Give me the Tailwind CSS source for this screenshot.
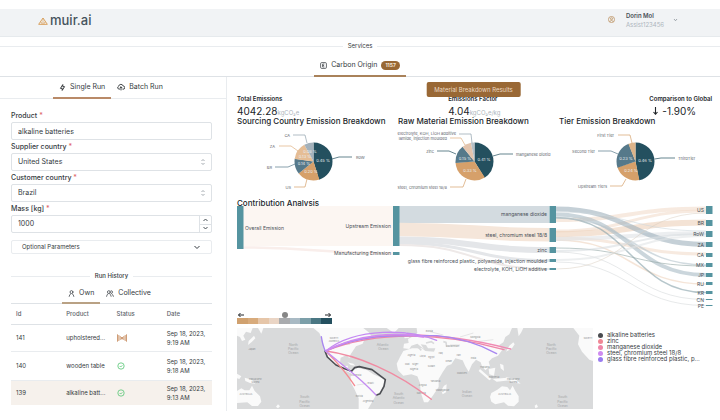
<!DOCTYPE html>
<html lang="en">
<head>
    <meta charset="UTF-8">
    <meta name="viewport" content="width=device-width, initial-scale=1.0">
    <title>muir.ai - Carbon Origin</title>
    <script src="https://cdn.jsdelivr.net/npm/@tailwindcss/browser@4"></script>
</head>
<body class="bg-white font-[Inter,sans-serif] text-[7px] leading-[10px] text-[#343a40]">

<!-- Header -->
<header class="mt-[9px] h-[28px] flex items-center justify-between bg-[#f1f3f5] border-b border-[#e6eaed] pl-[38px] pr-[42px] pb-[6px]">
    <a href="#" class="flex items-center gap-[2px]" aria-label="muir.ai">
        <svg class="w-[10px] h-[8px] mt-[2px]" viewBox="0 0 30 24" fill="none" stroke="#d9a25f" stroke-width="3" stroke-linejoin="round">
            <path d="M15 3 L28 22 H2 Z"/>
            <path d="M15 3 V22 M7 16 Q12 12 12 22 M23 16 Q18 12 18 22" stroke-width="2"/>
        </svg>
        <span class="text-[13px] leading-[16px] font-medium text-[#45525c]">muir.ai</span>
    </a>
    <button class="flex items-center text-left">
        <svg class="w-[7px] h-[7px] mr-[11px]" viewBox="0 0 24 24" fill="none" stroke="#b98b56" stroke-width="2.5">
            <circle cx="12" cy="12" r="10.5"/>
            <circle cx="12" cy="9.500" r="3.500"/>
            <path d="M5.500 19 Q12 11 18.500 19"/>
        </svg>
        <span class="flex flex-col leading-[9px] text-[6px] mr-[9px]">
            <span class="font-semibold text-[#495057]">Dorin Mol</span>
            <span class="text-[#adb5bd]">Assist123456</span>
        </span>
        <svg class="w-[5px] h-[4px]" viewBox="0 0 10 8" fill="none" stroke="#868e96" stroke-width="1.5"><path d="M2 2 L5 5.500 L8 2"/></svg>
    </button>
</header>

<!-- Services -->
<div class="flex items-center gap-[5px] mt-1 h-[10px] text-[6px]">
    <span class="flex-1 border-t border-[#e9ecef]"></span>
    <h2>Services</h2>
    <span class="flex-1 border-t border-[#e9ecef]"></span>
</div>
<nav class="flex justify-center mt-1 h-[22px] border-b border-[#dee2e6]">
    <button class="flex items-center gap-1 h-[22px] px-[6px] border-b-2 border-[#a9825a] text-[7px]">
        <svg class="w-[7px] h-[7px]" viewBox="0 0 24 24" fill="none" stroke="#343a40" stroke-width="2.500">
            <rect x="2" y="2" width="20" height="20" rx="4"/>
            <path d="M15 7 H9 V17 H15 M9 12 H14"/>
        </svg>
        Carbon Origin
        <span class="rounded-full bg-[#996835] text-[#f3e6d6] text-[5px] leading-[9px] font-bold px-1">1157</span>
    </button>
</nav>

<main class="flex">
    <!-- Left column -->
    <aside class="w-[227px] shrink-0 border-r border-[#e9ecef] pb-[6px]">
        <div class="flex justify-center h-[22px] pr-1 border-b border-[#e9ecef]">
            <button class="flex items-center gap-1 h-[22px] px-[6px] border-b-2 border-[#b98a68] text-[7px]">
                <svg class="w-[7px] h-[7px]" viewBox="0 0 24 24" fill="none" stroke="#212529" stroke-width="3" stroke-linejoin="round">
                    <path d="M13 2 V9 H19 L11 22 V15 H5 Z"/>
                </svg>
                Single Run
            </button>
            <button class="flex items-center gap-1 h-[22px] px-[6px] border-b-2 border-transparent text-[7px]">
                <svg class="w-[8px] h-[8px]" viewBox="0 0 24 24" fill="none" stroke="#212529" stroke-width="2.500" stroke-linecap="round" stroke-linejoin="round">
                    <path d="M7 19 A5 5 0 0 1 5 9.500 A7 7 0 0 1 18.500 9 A5 5 0 0 1 18 19"/>
                    <path d="M12 21 V12 M8.500 15 L12 11.500 L15.500 15"/>
                </svg>
                Batch Run
            </button>
        </div>

        <form class="flex flex-col gap-px pl-[11px] pr-[14px] pt-[11px]">
            <label for="product" class="h-[11px] leading-[11px] font-medium">Product <span class="text-[#e0646a]">*</span></label>
            <input id="product" type="text" value="alkaline batteries" class="h-[18px] w-full px-[6px] rounded-xs border border-[#dee2e6] text-[7px]">

            <label for="supplier" class="h-[11px] leading-[11px] font-medium">Supplier country <span class="text-[#e0646a]">*</span></label>
            <div class="relative">
                <select id="supplier" class="block appearance-none h-[18px] w-full px-[6px] rounded-xs border border-[#dee2e6] text-[7px]">
                    <option>United States</option>
                </select>
                <svg class="absolute right-[6px] top-[5px] w-[6px] h-[8px] pointer-events-none" viewBox="0 0 12 16" fill="none" stroke="#868e96" stroke-width="1.500"><path d="M3 6 L6 3 L9 6 M3 10 L6 13 L9 10"/></svg>
            </div>

            <label for="customer" class="h-[11px] leading-[11px] font-medium">Customer country <span class="text-[#e0646a]">*</span></label>
            <div class="relative">
                <select id="customer" class="block appearance-none h-[18px] w-full px-[6px] rounded-xs border border-[#dee2e6] text-[7px]">
                    <option>Brazil</option>
                </select>
                <svg class="absolute right-[6px] top-[5px] w-[6px] h-[8px] pointer-events-none" viewBox="0 0 12 16" fill="none" stroke="#868e96" stroke-width="1.500"><path d="M3 6 L6 3 L9 6 M3 10 L6 13 L9 10"/></svg>
            </div>

            <label for="mass" class="h-[11px] leading-[11px] font-medium">Mass [kg] <span class="text-[#e0646a]">*</span></label>
            <div class="flex h-[18px] rounded-xs border border-[#dee2e6]">
                <input id="mass" type="number" value="1000" class="[appearance:textfield] flex-1 min-w-0 px-[6px] text-[7px]">
                <div class="flex flex-col w-[12px] border-l border-[#dee2e6]">
                    <button type="button" aria-label="Increase" class="flex-1 flex items-center justify-center border-b border-[#dee2e6]">
                        <svg class="w-[5px] h-[4px]" viewBox="0 0 10 8" fill="none" stroke="#495057" stroke-width="2"><path d="M1 6 L5 2 L9 6"/></svg>
                    </button>
                    <button type="button" aria-label="Decrease" class="flex-1 flex items-center justify-center">
                        <svg class="w-[5px] h-[4px]" viewBox="0 0 10 8" fill="none" stroke="#495057" stroke-width="2"><path d="M1 2 L5 6 L9 2"/></svg>
                    </button>
                </div>
            </div>

            <button type="button" class="mt-[6px] h-[14px] flex items-center justify-between pl-[10px] pr-[11px] rounded-xs border border-[#e9ecef] text-[6px]">
                Optional Parameters
                <svg class="w-[6px] h-[5px]" viewBox="0 0 12 10" fill="none" stroke="#343a40" stroke-width="2"><path d="M1 2 L6 7 L11 2"/></svg>
            </button>
        </form>

        <!-- Run history -->
        <section class="pl-[11px] pr-[14px] pt-[17px]">
            <div class="flex items-center gap-[5px] h-[10px] text-[6px]">
                <span class="flex-1 border-t border-[#e9ecef]"></span>
                <h3 class="font-medium">Run History</h3>
                <span class="flex-1 border-t border-[#e9ecef]"></span>
            </div>
            <div class="flex justify-center mt-[3px] h-[20px] pr-1 border-b border-[#dee2e6]">
                <button class="flex items-center gap-1 h-[20px] px-[6px] border-b-2 border-[#b9a184] text-[7px]">
                    <svg class="w-[7px] h-[7px]" viewBox="0 0 24 24" fill="none" stroke="#343a40" stroke-width="2.500" stroke-linecap="round"><circle cx="12" cy="7" r="5"/><path d="M4 22 Q5 14 9 13 M20 22 Q19 14 15 13"/></svg>
                    Own
                </button>
                <button class="flex items-center gap-1 h-[20px] px-[6px] border-b-2 border-transparent text-[7px]">
                    <svg class="w-[8px] h-[7px]" viewBox="0 0 28 24" fill="none" stroke="#343a40" stroke-width="2.500" stroke-linecap="round"><circle cx="10" cy="7" r="5"/><path d="M2 22 Q3 14 7 13 M18 22 Q17 14 13 13 M18 2 A5 5 0 0 1 18 12 M21 14 Q25 16 26 22"/></svg>
                    Collective
                </button>
            </div>
            <table class="w-full table-fixed text-[6px] leading-[9px] text-left">
                <thead>
                    <tr class="h-[20px] border-b border-[#dee2e6] text-[#5c636a]">
                        <th class="pl-[5px] font-medium">Id</th>
                        <th class="pl-[5px] font-medium">Product</th>
                        <th class="pl-[5px] font-medium">Status</th>
                        <th class="pl-[5px] font-medium">Date</th>
                    </tr>
                </thead>
                <tbody>
                    <tr class="h-[27px] border-b border-[#e9ecef]">
                        <td class="pl-[5px]">141</td>
                        <td class="pl-[5px] whitespace-nowrap">upholstered...</td>
                        <td class="pl-[5px]">
                            <svg class="w-[10px] h-[8px]" viewBox="0 0 30 24" role="img" aria-label="Running">
                                <g fill="#cf9d77">
                                    <rect x="0" y="1" width="3" height="22"/><rect x="4" y="3" width="3" height="18"/><rect x="8" y="6" width="3" height="12"/>
                                    <rect x="12" y="9" width="6" height="7"/>
                                    <rect x="19" y="6" width="3" height="12"/><rect x="23" y="3" width="3" height="18"/><rect x="27" y="1" width="3" height="22"/>
                                </g>
                            </svg>
                        </td>
                        <td class="pl-[5px] whitespace-nowrap">Sep 18, 2023,<br>9:19 AM</td>
                    </tr>
                    <tr class="h-[29px] border-b border-[#e9ecef]">
                        <td class="pl-[5px]">140</td>
                        <td class="pl-[5px] whitespace-nowrap">wooden table</td>
                        <td class="pl-[5px]">
                            <svg class="w-[8px] h-[8px]" viewBox="0 0 24 24" fill="none" stroke="#5cc878" stroke-width="2.500" role="img" aria-label="Done"><circle cx="12" cy="12" r="9.500"/><path d="M8 12 L11 15 L16 10"/></svg>
                        </td>
                        <td class="pl-[5px] whitespace-nowrap">Sep 18, 2023,<br>9:18 AM</td>
                    </tr>
                    <tr class="h-[25px] bg-[#f6f1ec]">
                        <td class="pl-[5px]">139</td>
                        <td class="pl-[5px] whitespace-nowrap">alkaline batt...</td>
                        <td class="pl-[5px]">
                            <svg class="w-[8px] h-[8px]" viewBox="0 0 24 24" fill="none" stroke="#5cc878" stroke-width="2.500" role="img" aria-label="Done"><circle cx="12" cy="12" r="9.500"/><path d="M8 12 L11 15 L16 10"/></svg>
                        </td>
                        <td class="pl-[5px] whitespace-nowrap">Sep 18, 2023,<br>9:13 AM</td>
                    </tr>
                </tbody>
            </table>
        </section>
    </aside>

    <!-- Results -->
    <section class="relative flex-1 min-w-0 pl-[10px] pt-[17px]">
        <button class="absolute top-[5px] left-1/2 -translate-x-1/2 h-[15px] px-2 rounded-xs bg-[#996835] text-[#ecd9c2] text-[6px] whitespace-nowrap">Material Breakdown Results</button>

        <div class="flex justify-between pr-2 text-[#212529]">
            <div>
                <p class="text-[6px] font-semibold">Total Emissions</p>
                <p class="text-[10px] leading-[14px]">4042.28<span class="text-[6px] text-[#adb5bd]">kgCO₂e</span></p>
            </div>
            <div>
                <p class="text-[6px] font-semibold">Emissions Factor</p>
                <p class="text-[10px] leading-[14px]">4.04<span class="text-[6px] text-[#adb5bd]">kgCO₂e/kg</span></p>
            </div>
            <div>
                <p class="text-[6px] font-semibold">Comparison to Global</p>
                <p class="flex items-center gap-1 pl-1 text-[10px] leading-[14px]">
                    <svg class="w-[5px] h-[8px]" viewBox="0 0 10 16" fill="none" stroke="#212529" stroke-width="2.200"><path d="M5 0 V14 M1 10 L5 14.500 L9 10"/></svg>
                    -1.90%
                </p>
            </div>
        </div>

        <!-- Pie charts -->
        <div class="grid grid-cols-3 -mt-1">
            <div>
                <h3 class="text-[8px] font-medium text-[#212529] whitespace-nowrap">Sourcing Country Emission Breakdown</h3>
                <svg class="block w-full overflow-visible" viewBox="0 0 161 73" font-size="4" fill="#5c636a">
                    <g fill="none" stroke-width="19" transform="rotate(-90 76.500 35.500)">
                        <circle cx="76.500" cy="35.500" r="9.500" pathLength="360" stroke="#24505f" stroke-dasharray="163 360"/>
                        <circle cx="76.500" cy="35.500" r="9.500" pathLength="360" stroke="#d6a06a" stroke-dasharray="69 360" stroke-dashoffset="-162"/>
                        <circle cx="76.500" cy="35.500" r="9.500" pathLength="360" stroke="#56798a" stroke-dasharray="48 360" stroke-dashoffset="-231"/>
                        <circle cx="76.500" cy="35.500" r="9.500" pathLength="360" stroke="#e5bd95" stroke-dasharray="53 360" stroke-dashoffset="-278"/>
                        <circle cx="76.500" cy="35.500" r="9.500" pathLength="360" stroke="#a3b1bb" stroke-dasharray="29 360" stroke-dashoffset="-331"/>
                    </g>
                    <g fill="none" stroke-width="0.700">
                        <path d="M95 33 L102 31 H115" stroke="#24505f"/>
                        <path d="M70 53 L68 61 H57" stroke="#d6a06a"/>
                        <path d="M58 38 L51 41 H38" stroke="#56798a"/>
                        <path d="M61 25 L54 20 H42" stroke="#e0b080"/>
                        <path d="M70 17 L68 9 H56" stroke="#8fa0ac"/>
                    </g>
                    <text x="119" y="33">RoW</text>
                    <text x="54" y="63" text-anchor="end">US</text>
                    <text x="35" y="43" text-anchor="end">BR</text>
                    <text x="38" y="22" text-anchor="end">ZA</text>
                    <text x="53" y="11" text-anchor="end">CA</text>
                    <g fill="#e9eef0" text-anchor="middle">
                        <text x="86" y="35.500">0.45 %</text>
                        <text x="74" y="46.500">0.20 %</text>
                        <text x="67" y="39">0.14 %</text>
                        <text x="68" y="32">0.13 %</text>
                        <text x="73" y="27">0.08 %</text>
                    </g>
                </svg>
            </div>
            <div>
                <h3 class="text-[8px] font-medium text-[#212529] whitespace-nowrap">Raw Material Emission Breakdown</h3>
                <svg class="block w-full overflow-visible" viewBox="0 0 161 73" font-size="4" fill="#5c636a">
                    <g fill="none" stroke-width="19" transform="rotate(-90 76.500 35.500)">
                        <circle cx="76.500" cy="35.500" r="9.500" pathLength="360" stroke="#24505f" stroke-dasharray="148 360"/>
                        <circle cx="76.500" cy="35.500" r="9.500" pathLength="360" stroke="#d6a06a" stroke-dasharray="119 360" stroke-dashoffset="-147"/>
                        <circle cx="76.500" cy="35.500" r="9.500" pathLength="360" stroke="#56798a" stroke-dasharray="56 360" stroke-dashoffset="-265"/>
                        <circle cx="76.500" cy="35.500" r="9.500" pathLength="360" stroke="#e3c4ad" stroke-dasharray="28 360" stroke-dashoffset="-321"/>
                        <circle cx="76.500" cy="35.500" r="9.500" pathLength="360" stroke="#b4bfc6" stroke-dasharray="11 360" stroke-dashoffset="-349"/>
                    </g>
                    <g fill="none" stroke-width="0.700">
                        <path d="M95 30 L102 28 H115" stroke="#24505f"/>
                        <path d="M68 53 L65 61 H52" stroke="#d6a06a"/>
                        <path d="M58 28 L51 25 H39" stroke="#24505f"/>
                        <path d="M67 19 L63 12 H52" stroke="#e0b080"/>
                        <path d="M74 17 L73 8 H61" stroke="#8fa0ac"/>
                    </g>
                    <text x="118" y="30">manganese dioxid</text>
                    <text x="49" y="62.500" text-anchor="end">steel, chromium steel 18/8</text>
                    <text x="36" y="27" text-anchor="end">zinc</text>
                    <text x="49" y="14" text-anchor="end">lamide, injection moulded</text>
                    <text x="58" y="9" text-anchor="end">electrolyte, KOH, LiOH additive</text>
                    <g fill="#e9eef0" text-anchor="middle">
                        <text x="86" y="34.500">0.41 %</text>
                        <text x="72" y="46">0.33 %</text>
                        <text x="67" y="34">0.15 %</text>
                    </g>
                </svg>
            </div>
            <div>
                <h3 class="text-[8px] font-medium text-[#212529] whitespace-nowrap">Tier Emission Breakdown</h3>
                <svg class="block w-full overflow-visible" viewBox="0 0 161 73" font-size="4" fill="#5c636a">
                    <g fill="none" stroke-width="19" transform="rotate(-90 76.500 35.500)">
                        <circle cx="76.500" cy="35.500" r="9.500" pathLength="360" stroke="#24505f" stroke-dasharray="169 360"/>
                        <circle cx="76.500" cy="35.500" r="9.500" pathLength="360" stroke="#d6a06a" stroke-dasharray="84 360" stroke-dashoffset="-168"/>
                        <circle cx="76.500" cy="35.500" r="9.500" pathLength="360" stroke="#56798a" stroke-dasharray="88 360" stroke-dashoffset="-251"/>
                        <circle cx="76.500" cy="35.500" r="9.500" pathLength="360" stroke="#dcb48a" stroke-dasharray="22 360" stroke-dashoffset="-338"/>
                    </g>
                    <g fill="none" stroke-width="0.700">
                        <path d="M95.500 33 L102 32 H116" stroke="#24505f"/>
                        <path d="M67 53 L63 60 H51" stroke="#d6a06a"/>
                        <path d="M59 28 L52 25 H39" stroke="#56798a"/>
                        <path d="M73 17 L71 9 H59" stroke="#d6a06a"/>
                    </g>
                    <text x="119" y="34">ThirdTier</text>
                    <text x="48" y="61.500" text-anchor="end">Upstream Tiers</text>
                    <text x="36" y="26.500" text-anchor="end">Second Tier</text>
                    <text x="55" y="10.500" text-anchor="end">First Tier</text>
                    <g fill="#e9eef0" text-anchor="middle">
                        <text x="86" y="36">0.46 %</text>
                        <text x="72" y="45.500">0.24 %</text>
                        <text x="67" y="33.500">0.23 %</text>
                    </g>
                </svg>
            </div>
        </div>

        <!-- Sankey -->
        <h3 class="h-[8px] leading-[8px] text-[8px] font-medium text-[#212529]">Contribution Analysis</h3>
        <svg class="block w-full overflow-visible -mt-[2px]" viewBox="0 0 483 107" font-size="5" fill="#495057">
            <g fill="none">
                <path d="M6 21 H156" stroke="#fcf6f2" stroke-width="40"/>
                <path d="M6 42.500 C81 42.500 81 48.500 156 48.500" stroke="#f9eeeb" stroke-width="2.500"/>
                <path d="M162 9.500 H312" stroke="#d3dbe0" stroke-width="17"/>
                <path d="M162 24.500 C237 24.500 237 29.700 312 29.700" stroke="#f5e6da" stroke-width="13.500"/>
                <path d="M162 34.500 C237 34.500 237 45 312 45" stroke="#e4e6e9" stroke-width="6"/>
                <path d="M162 38 C237 38 237 55.500 312 55.500" stroke="#e4e6e9" stroke-width="3"/>
                <path d="M162 40 C237 40 237 64 312 64" stroke="#eee9e8" stroke-width="2"/>
            </g>
            <g fill="none" stroke-opacity="0.600">
                <path d="M319 15 C394 15 394 3.500 469 3.500" stroke="#f1dccb" stroke-width="4"/>
                <path d="M319 26 C394 26 394 6 469 6" stroke="#f1dccb" stroke-width="3"/>
                <path d="M319 29 C394 29 394 17.500 469 17.500" stroke="#ecd0b9" stroke-width="6"/>
                <path d="M319 33 C394 33 394 49 469 49" stroke="#f1dccb" stroke-width="3"/>
                <path d="M319 35 C394 35 394 79 469 79" stroke="#eed3be" stroke-width="1.500"/>
                <path d="M319 34 C394 34 394 28 469 28" stroke="#dfe3e6" stroke-width="4"/>
                <path d="M319 4 C394 4 394 39.500 469 39.500" stroke="#9fb1bc" stroke-width="5"/>
                <path d="M319 9.500 C394 9.500 394 70 469 70" stroke="#a9bac4" stroke-width="4"/>
                <path d="M319 12.500 C394 12.500 394 87.500 469 87.500" stroke="#86a0a9" stroke-width="1.500"/>
                <path d="M319 13 C394 13 394 60 469 60" stroke="#b4c3cc" stroke-width="1.500"/>
                <path d="M319 7 C394 7 394 26 469 26" stroke="#cfd8dd" stroke-width="1"/>
                <path d="M319 43 C394 43 394 61 469 61" stroke="#93a7a5" stroke-width="1"/>
                <path d="M319 46 C394 46 394 29 469 29" stroke="#d9dee1" stroke-width="2"/>
                <path d="M319 47 C394 47 394 94.500 469 94.500" stroke="#cdd1d3" stroke-width="0.800"/>
                <path d="M319 55 C394 55 394 31 469 31" stroke="#e1e4e6" stroke-width="2"/>
                <path d="M319 57 C394 57 394 100.500 469 100.500" stroke="#cdd1d3" stroke-width="0.800"/>
                <path d="M319 64 C394 64 394 8 469 8" stroke="#d8cabb" stroke-width="0.800"/>
            </g>
            <g fill="#5594a0">
                <rect x="0" y="1" width="6.500" height="43"/>
                <rect x="156" y="1" width="6.500" height="40"/>
                <rect x="156" y="47" width="6.500" height="3"/>
                <rect x="312.500" y="1" width="6.500" height="17"/>
                <rect x="312.500" y="23" width="6.500" height="14"/>
                <rect x="312.500" y="42" width="6.500" height="6"/>
                <rect x="312.500" y="54" width="6.500" height="3"/>
                <rect x="312.500" y="63" width="6.500" height="2"/>
                <rect x="469" y="1" width="6.500" height="8"/>
                <rect x="469" y="15" width="6.500" height="6"/>
                <rect x="469" y="26" width="6.500" height="6"/>
                <rect x="469" y="37" width="6.500" height="5"/>
                <rect x="469" y="48" width="6.500" height="4"/>
                <rect x="469" y="58" width="6.500" height="4"/>
                <rect x="469" y="68" width="6.500" height="4"/>
                <rect x="469" y="77" width="6.500" height="3"/>
                <rect x="469" y="86" width="6.500" height="3"/>
                <rect x="469" y="94" width="6.500" height="1"/>
                <rect x="469" y="100" width="6.500" height="1"/>
            </g>
            <text x="8" y="25">Overall Emission</text>
            <g text-anchor="end">
                <text x="154" y="23">Upstream Emission</text>
                <text x="154" y="50">Manufacturing Emission</text>
                <text x="310" y="11">manganese dioxide</text>
                <text x="310" y="32">steel, chromium steel 18/8</text>
                <text x="310" y="47">zinc</text>
                <text x="310" y="57.500">glass fibre reinforced plastic, polyamide, injection moulded</text>
                <text x="310" y="66">electrolyte, KOH, LiOH additive</text>
                <text x="467" y="7">US</text>
                <text x="467" y="20">BR</text>
                <text x="467" y="31">RoW</text>
                <text x="467" y="41.500">ZA</text>
                <text x="467" y="52">CA</text>
                <text x="467" y="62">MX</text>
                <text x="467" y="72">JP</text>
                <text x="467" y="81">RU</text>
                <text x="467" y="89.500">KR</text>
                <text x="467" y="96.500">CN</text>
                <text x="467" y="103">PE</text>
            </g>
        </svg>

        <!-- Colour scale -->
        <div class="w-[95px]">
            <div class="flex items-center justify-between h-[6px]">
                <svg class="w-[8px] h-[6px]" viewBox="0 0 16 12" fill="none" stroke="#212529" stroke-width="2"><path d="M14 6 H3 M7 2 L3 6 L7 10"/></svg>
                <span class="w-[6px] h-[6px] rounded-full bg-[#868686]"></span>
                <svg class="w-[8px] h-[6px]" viewBox="0 0 16 12" fill="none" stroke="#212529" stroke-width="2"><path d="M2 6 H13 M9 2 L13 6 L9 10"/></svg>
            </div>
            <div class="grid grid-cols-9 h-[6px]">
                <span class="bg-[#d0a16f]"></span>
                <span class="bg-[#d8ab7c]"></span>
                <span class="bg-[#e6c6a9]"></span>
                <span class="bg-[#ead5c5]"></span>
                <span class="bg-[#a9abae]"></span>
                <span class="bg-[#a9bac4]"></span>
                <span class="bg-[#7c9fa9]"></span>
                <span class="bg-[#4a7783]"></span>
                <span class="bg-[#24505f]"></span>
            </div>
        </div>

        <!-- Map -->
        <div class="flex gap-[5px] mt-1">
            <svg class="block flex-1 min-w-0" viewBox="21 69 1068 243">
                <rect x="21" y="69" width="1068" height="243" fill="#d9dadb"/>
                <g fill="#fafafa">
                    <path d="M21 69 H68 L62 84 L48 80 L40 92 L46 104 L36 108 L30 96 L21 92 Z"/>
                    <path d="M56 108 L66 98 L72 92 L76 100 L66 110 L54 120 Z"/>
                    <path d="M84 69 L94 86 L100 69 Z"/>
                    <path d="M21 258 L34 250 L44 256 L58 256 L66 242 L74 258 L90 274 L94 290 L84 303 L66 303 L52 292 L21 294 Z"/>
                    <path d="M21 206 L34 214 L28 222 L21 220 Z M44 218 L66 224 L76 236 L60 234 L46 228 Z"/>
                    <path d="M138 305 L144 298 L150 304 L144 310 Z"/>
                    <!-- North and Central America -->
                    <path d="M250 69 L268 84 L278 108 L282 132 L292 154 L312 176 L336 192 L356 202 L366 206 L366 196 L352 192 L354 182 L340 184 L330 172 L332 158 L350 150 L358 160 L362 148 L378 124 L398 116 L404 102 L424 92 L416 82 L400 69 Z"/>
                    <path d="M352 172 L370 176 L376 182 L362 180 Z"/>
                    <!-- South America -->
                    <path d="M368 196 L384 188 L412 196 L430 208 L462 222 L464 234 L452 262 L436 274 L426 292 L414 312 L386 312 L386 280 L372 250 L362 232 L362 212 Z"/>
                    <path d="M470 69 L492 84 L506 69 Z M520 88 L530 82 L538 98 L524 100 Z"/>
                    <!-- Africa -->
                    <path d="M520 138 L546 130 L576 130 L586 138 L614 140 L626 160 L638 178 L654 178 L638 202 L626 222 L626 246 L610 270 L594 292 L582 292 L572 262 L570 234 L562 214 L544 208 L520 212 L504 196 L500 176 L510 156 Z"/>
                    <path d="M642 242 L650 238 L648 262 L638 268 L634 256 Z"/>
                    <!-- Europe and Asia -->
                    <path d="M520 130 L522 116 L536 114 L534 102 L550 94 L562 84 L560 69 H880 L874 82 L866 94 L862 69 H846 L838 88 L826 96 L820 112 L808 120 L816 136 L804 152 L786 160 L776 170 L780 184 L766 196 L756 184 L752 172 L738 164 L726 178 L716 200 L706 184 L698 166 L676 160 L664 178 L640 186 L626 164 L612 140 L616 130 L594 130 L588 120 L572 118 L582 132 L562 116 L544 122 L538 132 Z"/>
                    <path d="M838 122 L850 112 L854 118 L846 130 L828 140 Z M750 192 L784 222 L778 226 L746 198 Z M776 192 L796 188 L792 212 L778 208 Z M788 222 L830 218 L840 226 L800 230 Z M810 176 L820 180 L822 198 L812 190 Z M826 216 L856 222 L872 236 L846 232 Z"/>
                    <!-- Australia -->
                    <path d="M784 264 L802 254 L816 244 L832 246 L840 256 L848 242 L856 258 L866 274 L866 290 L852 304 L834 302 L822 292 L796 298 L784 290 L780 276 Z"/>
                    <path d="M914 302 L920 298 L924 306 L916 310 Z"/>
                    <path d="M1030 69 L1048 92 L1044 118 L1056 140 L1078 164 L1089 168 V69 Z"/>
                </g>
                <g fill="none" stroke="#d9dadb" stroke-width="2">
                    <path d="M556 122 L566 128 L574 136 M640 110 L648 112 L650 126 M588 114 L604 110 L612 116" stroke-width="5"/>
                    <path d="M340 112 L356 110 M346 118 L360 118 M660 120 H690 M740 110 L790 104 M380 240 L410 236 M600 80 L640 90 M690 96 L730 84"/>
                </g>
                <g font-size="10" fill="#a3a5a7" text-anchor="middle">
                    <text x="190" y="122">North</text><text x="190" y="135">Pacific</text><text x="190" y="148">Ocean</text>
                    <text x="224" y="280">South</text><text x="224" y="293">Pacific</text><text x="224" y="306">Ocean</text>
                    <text x="458" y="122">Atlantic</text><text x="460" y="134">Ocean</text>
                    <text x="506" y="270">South</text><text x="506" y="283">Atlantic</text><text x="506" y="296">Ocean</text>
                    <text x="711" y="263">Indian</text><text x="711" y="275">Ocean</text>
                    <text x="964" y="122">North</text><text x="964" y="135">Pacific</text><text x="964" y="148">Ocean</text>
                    <text x="998" y="280">South</text><text x="998" y="293">Pacific</text><text x="998" y="306">Ocean</text>
                </g>
                <g font-size="7" fill="#8d8f91" text-anchor="middle">
                    <text x="312" y="102">NORTH</text><text x="312" y="112">AMERICA</text>
                    <text x="48" y="270">AUSTRALIA</text><text x="824" y="270">AUSTRALIA</text>
                    <text x="66" y="134">Japan</text><text x="76" y="226">Papua New</text><text x="76" y="235">Guinea</text>
                    <text x="544" y="154">Algeria</text><text x="578" y="156">Libya</text><text x="604" y="158">Egypt</text>
                    <text x="532" y="180">Mali</text><text x="556" y="180">Niger</text><text x="604" y="186">Sudan</text>
                    <text x="552" y="196">Nigeria</text><text x="616" y="230">Tanzania</text><text x="578" y="244">Angola</text>
                    <text x="638" y="258">Madagascar</text><text x="574" y="268">Namibia</text>
                    <text x="598" y="80">Russia</text><text x="668" y="126">Kazakhstan</text><text x="632" y="146">Iraq</text>
                    <text x="686" y="152">Iran</text><text x="656" y="170">Oman</text><text x="730" y="162">India</text>
                    <text x="696" y="208">Maldives</text><text x="736" y="98">Mongolia</text><text x="764" y="188">Thailand</text>
                    <text x="792" y="218">Indonesia</text><text x="850" y="226">Papua New</text><text x="850" y="235">Guinea</text>
                    <text x="378" y="214">Colombia</text><text x="388" y="276">Bolivia</text><text x="422" y="238">Brazil</text>
                    <text x="414" y="292">Argentina</text><text x="1074" y="102">NORTH</text>
                </g>
                <g fill="none" stroke-width="4" stroke-linecap="round" stroke-linejoin="round">
                    <path d="M285 138 L292 156 L318 180 L346 192 L364 199 L374 188 L388 185 L426 194 L466 224 L462 244 L450 266 L440 270" stroke="#4d4f54" stroke-width="5"/>
                    <path d="M287 138 C380 150 500 200 604 283" stroke="#f08ba2"/>
                    <path d="M287 138 C320 170 350 205 374 242" stroke="#f58a92"/>
                    <path d="M287 138 C420 70 640 80 842 132" stroke="#f08bb4"/>
                    <path d="M287 138 C440 76 640 82 822 134" stroke="#ef86a8"/>
                    <path d="M287 138 C400 86 480 92 620 92 C690 98 750 118 800 146" stroke="#a887f0"/>
                    <path d="M287 138 C380 64 540 74 620 106" stroke="#c48bf2"/>
                    <path d="M287 138 C390 84 500 82 580 96" stroke="#cf8bf0" stroke-width="5"/>
                    <path d="M274 95 Q278 122 286 138" stroke="#a887f0"/>
                    <path d="M287 138 L350 190 Q400 230 438 270" stroke="#c48bf2"/>
                </g>
            </svg>
            <ul class="w-[122px] shrink-0 pt-1 text-[6px] leading-[6px] text-[#343a40]">
                <li class="flex items-center gap-1"><span class="w-[5px] h-[5px] rounded-full bg-[#4a4c50]"></span>alkaline batteries</li>
                <li class="flex items-center gap-1"><span class="w-[5px] h-[5px] rounded-full bg-[#f08795]"></span>zinc</li>
                <li class="flex items-center gap-1"><span class="w-[5px] h-[5px] rounded-full bg-[#ef86a8]"></span>manganese dioxide</li>
                <li class="flex items-center gap-1"><span class="w-[5px] h-[5px] rounded-full bg-[#cf8bf0]"></span>steel, chromium steel 18/8</li>
                <li class="flex items-center gap-1"><span class="w-[5px] h-[5px] rounded-full bg-[#9a7cf0]"></span>glass fibre reinforced plastic, p...</li>
            </ul>
        </div>
    </section>
</main>

</body>
</html>
